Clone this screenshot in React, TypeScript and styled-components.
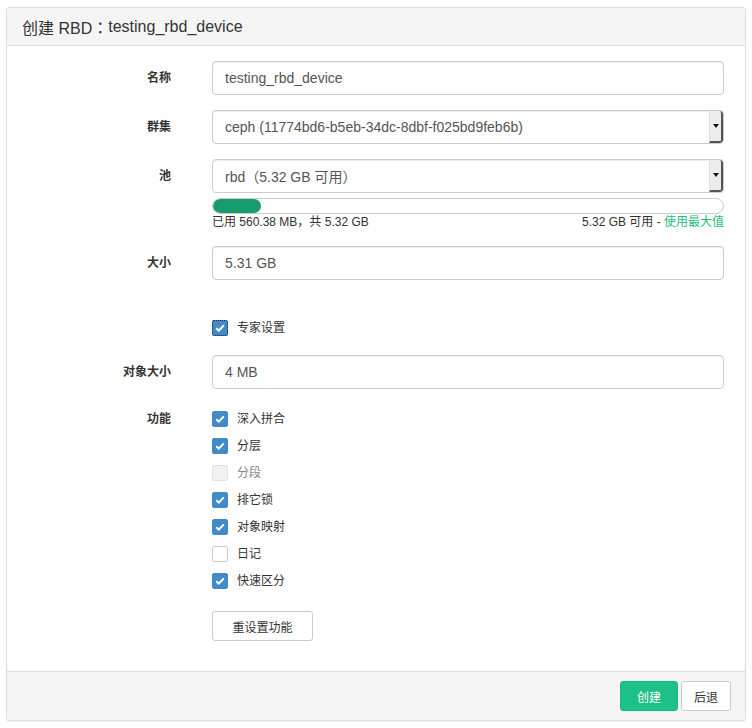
import React from "react";
import styled, { createGlobalStyle } from "styled-components";

const GlobalStyle = createGlobalStyle`
  body {
    margin: 0;
    padding: 7px 6px;
    background: #fff;
    font-family: "Liberation Sans", Arial, "Noto Sans CJK SC", sans-serif;
    color: #333;
  }
`;

const Panel = styled.div`
  width: 738px;
  border: 1px solid #ddd;
  border-radius: 3px;
  box-shadow: 0 1px 1px rgba(0, 0, 0, 0.05);
  background: #fff;
`;

const PanelHeader = styled.div`
  height: 38px;
  box-sizing: border-box;
  padding: 0 15px;
  display: flex;
  align-items: center;
  background: #f5f5f5;
  border-bottom: 1px solid #ddd;
  font-size: 16px;
  color: #333;
`;

const WideColon = styled.span`
  font-family: "Noto Sans CJK TC", sans-serif;
`;

const PanelBody = styled.div`
  padding: 15px 20px 15px 15px;
`;

const Row = styled.div<{ $mb?: number }>`
  display: grid;
  grid-template-columns: 149px 512px;
  column-gap: 41px;
  margin-bottom: ${(p) => (p.$mb ?? 15)}px;
`;

const Label = styled.label<{ $compact?: boolean }>`
  text-align: right;
  font-size: 12px;
  font-weight: bold;
  line-height: ${(p) => (p.$compact ? "16px" : "34px")};
`;

const Input = styled.div`
  height: 34px;
  box-sizing: border-box;
  border: 1px solid #ccc;
  border-radius: 4px;
  padding: 0 12px;
  display: flex;
  align-items: center;
  font-size: 14px;
  color: #555;
  box-shadow: inset 0 1px 1px rgba(0, 0, 0, 0.075);
`;

const Select = styled(Input)`
  padding-right: 0;
  justify-content: space-between;
  overflow: hidden;
`;

const SelectArrow = styled.div`
  width: 11px;
  align-self: stretch;
  background: #ececec;
  border-left: 1px solid #e0e0e0;
  border-right: 2px solid #555;
  border-bottom: 2px solid #555;
  border-radius: 0 3px 3px 0;
  display: flex;
  align-items: center;
  justify-content: center;
  &::after {
    content: "";
    border-left: 3px solid transparent;
    border-right: 3px solid transparent;
    border-top: 4px solid #111;
  }
`;

const Progress = styled.div`
  margin-top: 5px;
  height: 16px;
  box-sizing: border-box;
  border: 1px solid #ccc;
  border-radius: 8px;
  overflow: hidden;
`;

const ProgressFill = styled.div`
  height: 100%;
  background: #169c6d;
  border-radius: 8px;
`;

const UsageText = styled.div`
  display: flex;
  justify-content: space-between;
  font-size: 12px;
  line-height: 17px;
  color: #333;
`;

const MaxLink = styled.a`
  color: #1ebc80;
  text-decoration: none;
`;

const CheckList = styled.div`
  display: flex;
  flex-direction: column;
  gap: 11px;
`;

const CheckRow = styled.label<{ $disabled?: boolean }>`
  display: flex;
  align-items: center;
  gap: 9px;
  font-size: 12px;
  line-height: 16px;
  color: ${(p) => (p.$disabled ? "#888" : "#333")};
`;

const Box = styled.span<{ $state: "on" | "off" | "disabled"; $focus?: boolean }>`
  width: 16px;
  height: 16px;
  box-sizing: border-box;
  border-radius: 2px;
  display: inline-flex;
  align-items: center;
  justify-content: center;
  background: ${(p) =>
    p.$state === "on" ? "#428bca" : p.$state === "disabled" ? "#f1f1f1" : "#fff"};
  border: 1px solid
    ${(p) => (p.$state === "on" ? "#428bca" : p.$state === "disabled" ? "#e2e2e2" : "#ccc")};
  outline: ${(p) => (p.$focus ? "1px dotted #222" : "none")};
  outline-offset: -1px;
`;

const ResetButton = styled.button`
  margin-top: 22px;
  width: 101px;
  height: 30px;
  border: 1px solid #ccc;
  border-radius: 3px;
  background: #fff;
  font-family: inherit;
  font-size: 12px;
  color: #333;
`;

const PanelFooter = styled.div`
  height: 49px;
  box-sizing: border-box;
  background: #f5f5f5;
  border-top: 1px solid #ddd;
  display: flex;
  align-items: center;
  justify-content: flex-end;
  gap: 3px;
  padding-right: 14px;
`;

const FooterButton = styled.button<{ $primary?: boolean }>`
  height: 30px;
  padding: 0 ${(p) => (p.$primary ? 16 : 12)}px;
  border-radius: 3px;
  font-family: inherit;
  font-size: 12px;
  border: 1px solid ${(p) => (p.$primary ? "#1cb97f" : "#ccc")};
  background: ${(p) => (p.$primary ? "#1dc086" : "#fff")};
  color: ${(p) => (p.$primary ? "#fff" : "#333")};
`;

const Check = () => (
  <svg width="10" height="8" viewBox="0 0 10 8">
    <path d="M1.2 4.2 L3.8 6.6 L8.8 1.4" fill="none" stroke="#fff" strokeWidth="2" />
  </svg>
);

const features: { name: string; state: "on" | "off" | "disabled" }[] = [
  { name: "深入拼合", state: "on" },
  { name: "分层", state: "on" },
  { name: "分段", state: "disabled" },
  { name: "排它锁", state: "on" },
  { name: "对象映射", state: "on" },
  { name: "日记", state: "off" },
  { name: "快速区分", state: "on" },
];

export default function App() {
  return (
    <>
      <GlobalStyle />
      <Panel>
        <PanelHeader>
          创建 RBD<WideColon>：</WideColon>testing_rbd_device
        </PanelHeader>
        <PanelBody>
          <Row>
            <Label>名称</Label>
            <Input>testing_rbd_device</Input>
          </Row>
          <Row>
            <Label>群集</Label>
            <Select>
              ceph (11774bd6-b5eb-34dc-8dbf-f025bd9feb6b)
              <SelectArrow />
            </Select>
          </Row>
          <Row>
            <Label>池</Label>
            <div>
              <Select>
                rbd（5.32 GB 可用）
                <SelectArrow />
              </Select>
              <Progress>
                <ProgressFill style={{ width: "9.4%" }} />
              </Progress>
              <UsageText>
                <span>已用 560.38 MB，共 5.32 GB</span>
                <span>
                  5.32 GB 可用 - <MaxLink>使用最大值</MaxLink>
                </span>
              </UsageText>
            </div>
          </Row>
          <Row $mb={40}>
            <Label>大小</Label>
            <Input>5.31 GB</Input>
          </Row>
          <Row $mb={19}>
            <span />
            <CheckRow>
              <Box $state="on" $focus>
                <Check />
              </Box>
              专家设置
            </CheckRow>
          </Row>
          <Row $mb={22}>
            <Label>对象大小</Label>
            <Input>4 MB</Input>
          </Row>
          <Row>
            <Label $compact>功能</Label>
            <div>
              <CheckList>
                {features.map((f) => (
                  <CheckRow key={f.name} $disabled={f.state === "disabled"}>
                    <Box $state={f.state}>{f.state === "on" && <Check />}</Box>
                    {f.name}
                  </CheckRow>
                ))}
              </CheckList>
              <ResetButton>重设置功能</ResetButton>
            </div>
          </Row>
        </PanelBody>
        <PanelFooter>
          <FooterButton $primary>创建</FooterButton>
          <FooterButton>后退</FooterButton>
        </PanelFooter>
      </Panel>
    </>
  );
}
